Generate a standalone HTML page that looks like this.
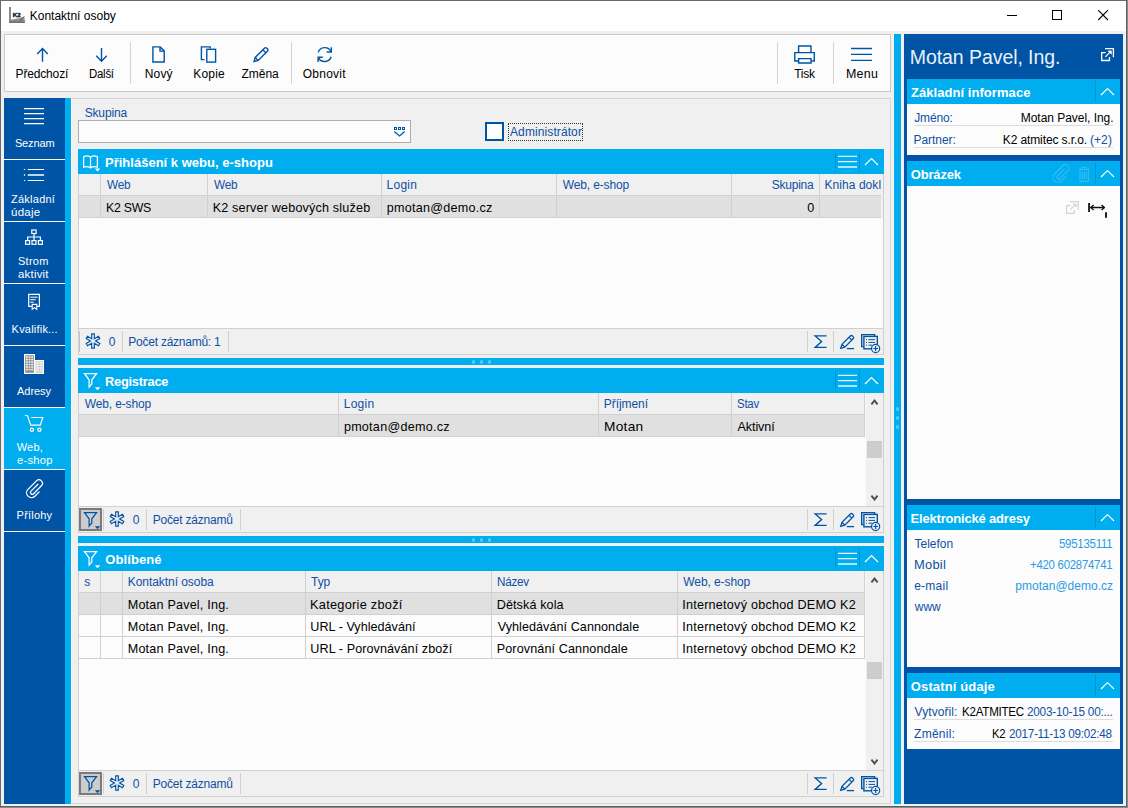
<!DOCTYPE html>
<html lang="cs"><head><meta charset="utf-8"><title>Kontaktní osoby</title>
<style>
html,body{margin:0;padding:0;}
body{width:1128px;height:808px;position:relative;overflow:hidden;background:#f0f0f0;font-family:"Liberation Sans",sans-serif;}
.a{position:absolute;box-sizing:border-box;}
.t{white-space:pre;}
svg{position:absolute;overflow:visible;}
</style></head><body>
<div class="a" style="left:0px;top:0px;width:1128px;height:808px;background:#8c8c8c;"></div>
<div class="a" style="left:0px;top:0px;width:1127px;height:807px;background:#5e5e5e;"></div>
<div class="a" style="left:0px;top:0px;width:1126px;height:806px;background:#6a6a6a;"></div>
<div class="a" style="left:1px;top:1px;width:1125px;height:805px;background:#f0f0f0;"></div>
<div class="a" style="left:1px;top:1px;width:1125px;height:30px;background:#ffffff;"></div>
<svg style="left:9px;top:7px" width="16" height="16" viewBox="0 0 16 16">
<defs><linearGradient id="gi" x1="0" y1="0" x2="0" y2="1"><stop offset="0" stop-color="#b8b8b8"/><stop offset="1" stop-color="#6c6c6c"/></linearGradient></defs>
<rect x="0" y="0" width="2" height="16" fill="#8a8a8a"/>
<path d="M0 13 L8 11.5 L15.5 9.5 L16 16 L0 16Z" fill="url(#gi)"/>
<path d="M11 13.5 L15.3 9.6" stroke="#444" stroke-width="1"/>
<text x="3.7" y="9.7" font-family="Liberation Sans,sans-serif" font-size="6" font-weight="bold" fill="#111" stroke="#111" stroke-width="0.35" textLength="8" lengthAdjust="spacingAndGlyphs">K2</text>
</svg>
<div class="a t" style="top:8.40px;font-size:12px;line-height:16px;color:#000;left:29.76px;">Kontaktní osoby</div>
<svg style="left:1000px;top:0" width="128" height="31" viewBox="0 0 128 31">
<path d="M7 15.5 H17" stroke="#000" stroke-width="1" fill="none"/>
<rect x="52.5" y="10.5" width="9" height="9" stroke="#000" stroke-width="1" fill="none"/>
<path d="M98.2 10.2 L108 20 M108 10.2 L98.2 20" stroke="#000" stroke-width="1.1" fill="none"/>
</svg>
<div class="a" style="left:4px;top:34px;width:887px;height:58px;background:#fcfcfc;border:1px solid #c9c9c9;"></div>
<div class="a" style="left:130px;top:42px;width:1px;height:42px;background:#d4d4d4;"></div>
<div class="a" style="left:291px;top:42px;width:1px;height:42px;background:#d4d4d4;"></div>
<div class="a" style="left:777px;top:42px;width:1px;height:42px;background:#d4d4d4;"></div>
<div class="a" style="left:833px;top:42px;width:1px;height:42px;background:#d4d4d4;"></div>
<div class="a t" style="top:66.00px;font-size:12px;line-height:16px;color:#000;letter-spacing:-0.159px;left:15.56px;">Předchozí</div>
<div class="a t" style="top:66.00px;font-size:12px;line-height:16px;color:#000;letter-spacing:-0.250px;left:88.81px;transform:scaleX(0.9495);transform-origin:0 0;">Další</div>
<div class="a t" style="top:66.00px;font-size:12px;line-height:16px;color:#000;letter-spacing:0.099px;left:144.86px;">Nový</div>
<div class="a t" style="top:66.00px;font-size:12px;line-height:16px;color:#000;letter-spacing:0.183px;left:193.26px;">Kopie</div>
<div class="a t" style="top:66.00px;font-size:12px;line-height:16px;color:#000;letter-spacing:-0.072px;left:241.62px;">Změna</div>
<div class="a t" style="top:66.00px;font-size:12px;line-height:16px;color:#000;letter-spacing:0.250px;left:302.74px;">Obnovit</div>
<div class="a t" style="top:66.00px;font-size:12px;line-height:16px;color:#000;letter-spacing:-0.250px;left:794.15px;">Tisk</div>
<div class="a t" style="top:66.00px;font-size:12px;line-height:16px;color:#000;letter-spacing:0.250px;left:845.53px;transform:scaleX(1.0346);transform-origin:0 0;">Menu</div>
<svg style="left:0;top:34px" width="892" height="58" viewBox="0 34 892 58" fill="none" stroke="#0054a6" stroke-width="1.4">
<path d="M42.5 61.8 V48.6 M37.2 54 L42.5 48.6 L47.8 54"/>
<path d="M101.5 48 V61.2 M96.2 55.8 L101.5 61.2 L106.8 55.8"/>
<path d="M152.9 46.9 H160.2 L164.2 50.9 V62 H152.9 Z M160 47.2 V51.1 H164"/>
<path d="M204.6 59.6 H201.4 V46.9 H210.2 V48.6"/><rect x="206.8" y="49.3" width="8.8" height="12.8"/>
<path d="M254 61.6 L255.2 57.4 L264.4 48.2 Q265.6 47 266.8 48.2 L267.4 48.8 Q268.6 50 267.4 51.2 L258.2 60.4 Z M255.2 57.4 L258.2 60.4 M262.8 49.8 L265.8 52.8"/>
<path d="M318.2 52.4 A6.9 6.9 0 0 1 331 51.6 M331.2 56.8 A6.9 6.9 0 0 1 318.4 57.6"/>
<path d="M331.3 47.3 V52 H326.6 M318.1 61.9 V57.2 H322.8"/>
<path d="M798.6 52 V46 H811 V52 M798.6 61 H794.8 V52.6 H814.3 V61 H811 M798.6 58.6 H811 V63 H798.6 Z" stroke-width="1.4"/>
<path d="M851 48.5 H872 M851 54.4 H872 M851 60.4 H872" stroke-width="1.4"/>
</svg>
<div class="a" style="left:4px;top:98px;width:61px;height:706px;background:#0054a6;"></div>
<div class="a" style="left:65px;top:98px;width:6px;height:706px;background:#00adef;"></div>
<div class="a" style="left:4px;top:408px;width:61px;height:61px;background:#00adef;"></div>
<div class="a" style="left:4px;top:159px;width:61px;height:1px;background:#ffffff;"></div>
<div class="a" style="left:4px;top:221px;width:61px;height:1px;background:#ffffff;"></div>
<div class="a" style="left:4px;top:283px;width:61px;height:1px;background:#ffffff;"></div>
<div class="a" style="left:4px;top:345px;width:61px;height:1px;background:#ffffff;"></div>
<div class="a" style="left:4px;top:407px;width:61px;height:1px;background:#ffffff;"></div>
<div class="a" style="left:4px;top:469px;width:61px;height:1px;background:#ffffff;"></div>
<div class="a" style="left:4px;top:531px;width:61px;height:1px;background:#ffffff;"></div>
<div class="a t" style="top:136.00px;font-size:11px;line-height:14px;color:#ffffff;letter-spacing:-0.118px;left:14.90px;">Seznam</div>
<div class="a t" style="top:192.00px;font-size:11px;line-height:14px;color:#ffffff;letter-spacing:0.250px;left:10.99px;">Základní</div>
<div class="a t" style="top:205.00px;font-size:11px;line-height:14px;color:#ffffff;letter-spacing:0.250px;left:10.98px;transform:scaleX(1.0412);transform-origin:0 0;">údaje</div>
<div class="a t" style="top:254.00px;font-size:11px;line-height:14px;color:#ffffff;letter-spacing:0.250px;left:18.00px;">Strom</div>
<div class="a t" style="top:267.00px;font-size:11px;line-height:14px;color:#ffffff;letter-spacing:0.250px;left:18.25px;transform:scaleX(1.0301);transform-origin:0 0;">aktivit</div>
<div class="a t" style="top:322.00px;font-size:11px;line-height:14px;color:#ffffff;letter-spacing:0.206px;left:11.62px;">Kvalifik...</div>
<div class="a t" style="top:384.00px;font-size:11px;line-height:14px;color:#ffffff;letter-spacing:-0.067px;left:17.10px;">Adresy</div>
<div class="a t" style="top:440.00px;font-size:11px;line-height:14px;color:#ffffff;letter-spacing:0.250px;left:16.70px;">Web,</div>
<div class="a t" style="top:453.00px;font-size:11px;line-height:14px;color:#ffffff;letter-spacing:0.250px;left:16.65px;transform:scaleX(1.0172);transform-origin:0 0;">e-shop</div>
<div class="a t" style="top:508.00px;font-size:11px;line-height:14px;color:#ffffff;letter-spacing:0.207px;left:16.62px;">Přílohy</div>
<svg style="left:4px;top:98px" width="61" height="440" viewBox="4 98 61 440" fill="none" stroke="#fff" stroke-width="1.2">
<path d="M24 108.6 H44 M24 113.6 H44 M24 118.6 H44 M24 123.6 H44" stroke-width="1.2"/>
<path d="M27.8 169.5 H44.1 M27.8 180.5 H44.1 M23.9 169.5 H25.1 M23.9 180.5 H25.1"/><path d="M27.8 175.1 H44.1 M23.9 175.1 H25.1" stroke-width="1.5"/>
<g stroke-width="1.2"><rect x="31.8" y="230" width="4.3" height="3.5"/><path d="M34 233.5 V240.5 M27.7 240.5 V237 H40.4 V240.5"/><rect x="25.6" y="240.6" width="4" height="3.7"/><rect x="32" y="240.6" width="4" height="3.7"/><rect x="38.4" y="240.6" width="4" height="3.7"/></g>
<g stroke-width="1.2"><path d="M32 306.3 H28.7 V294.3 H39.4 V306.3 H37"/><path d="M30.3 297.2 H37.7 M30.3 299.7 H35.8 M30.3 302.2 H33.7" stroke-width="1"/><path d="M32.2 304.4 H36.8 V309.4 L34.5 307.6 L32.2 309.4 Z" stroke-width="1.1"/></g>
<g stroke="none"><rect x="24" y="354" width="11" height="20" fill="#fff"/><rect x="35" y="360" width="9" height="14" fill="#fff"/><rect x="25.2" y="355.2" width="8.7" height="17.6" fill="#8e8e8e"/><rect x="35.5" y="361.2" width="7.3" height="11.6" fill="#d2d2d2"/>
<g fill="#f4f4f4"><rect x="26" y="356.3" width="1.9" height="1.5"/><rect x="28.7" y="356.3" width="1.7" height="1.5"/><rect x="31.2" y="356.3" width="1.9" height="1.5"/><rect x="26" y="358.8" width="1.9" height="1.5"/><rect x="28.7" y="358.8" width="1.7" height="1.5"/><rect x="31.2" y="358.8" width="1.9" height="1.5"/><rect x="26" y="361.3" width="1.9" height="1.5"/><rect x="28.7" y="361.3" width="1.7" height="1.5"/><rect x="31.2" y="361.3" width="1.9" height="1.5"/><rect x="26" y="363.8" width="1.9" height="1.5"/><rect x="28.7" y="363.8" width="1.7" height="1.5"/><rect x="31.2" y="363.8" width="1.9" height="1.5"/><rect x="26" y="366.3" width="1.9" height="1.5"/><rect x="28.7" y="366.3" width="1.7" height="1.5"/><rect x="31.2" y="366.3" width="1.9" height="1.5"/><rect x="26" y="368.8" width="1.9" height="1.5"/><rect x="28.7" y="368.8" width="1.7" height="1.5"/><rect x="31.2" y="368.8" width="1.9" height="1.5"/>
<rect x="36.3" y="362.3" width="2.8" height="1.4"/><rect x="39.9" y="362.3" width="2.2" height="1.4"/><rect x="36.3" y="364.8" width="2.8" height="1.4"/><rect x="39.9" y="364.8" width="2.2" height="1.4"/><rect x="36.3" y="367.3" width="2.8" height="1.4"/><rect x="39.9" y="367.3" width="2.2" height="1.4"/><rect x="36.3" y="369.8" width="2.8" height="1.4"/><rect x="39.9" y="369.8" width="2.2" height="1.4"/></g></g>
<g stroke-width="1.2"><path d="M24.9 415.5 H27.4 L30.7 425.2 H40.3 L42.8 417.5 H31.2"/><circle cx="31.9" cy="429.8" r="1.6"/><circle cx="39.4" cy="429.8" r="1.6"/></g>
<path d="M39.00 490.80 L34.35 495.45 A4.88 4.88 0 0 1 27.45 488.55 L35.93 480.03 A3.5 3.5 0 0 1 40.88 484.98 L33.09 492.89 A1.82 1.82 0 0 1 30.51 490.31 L37.70 483.20" stroke-width="1.25" transform="translate(0.5,0.8)"/>
</svg>
<div class="a" style="left:71px;top:98px;width:820px;height:706px;background:#f0f0f0;border:1px solid #d4d4d4;border-left-color:#fafafa;"></div>
<div class="a t" style="top:105.00px;font-size:12px;line-height:16px;color:#0f4fa3;letter-spacing:-0.163px;left:84.70px;">Skupina</div>
<div class="a" style="left:78px;top:120px;width:333px;height:23px;background:#fcfcfc;border:1px solid #adadad;"></div>
<svg style="left:392px;top:125px" width="16" height="14" viewBox="392 125 16 14" fill="none" stroke="#0054a6" stroke-width="1">
<rect x="394.5" y="127.5" width="2" height="2"/><rect x="398.5" y="127.5" width="2" height="2"/><rect x="402.5" y="127.5" width="2" height="2"/>
<path d="M394.3 131.5 L399.5 136 L404.7 131.5" stroke-width="1.2"/></svg>
<div class="a" style="left:485px;top:122px;width:19px;height:19px;background:#ffffff;border:2px solid #0054a6;"></div>
<div class="a t" style="top:124.00px;font-size:12px;line-height:16px;color:#0f4fa3;letter-spacing:0.100px;left:510.00px;">Administrátor</div>
<div class="a" style="left:508px;top:123px;width:75px;height:18px;border:1px dotted #333;"></div>
<div class="a" style="left:78px;top:149px;width:806px;height:25px;background:#00adef;"></div>
<svg style="left:82px;top:155px" width="20" height="16" viewBox="82 155 20 16" fill="none" stroke="#fff" stroke-width="1.2">
<path d="M83.6 156.7 Q87 155.1 90.5 157 Q94 155.1 97.4 156.7 V167.2 Q94 165.9 90.5 167.7 Q87 165.9 83.6 167.2 Z M90.5 157 V168.4" stroke-width="1.25"/>
<path d="M94.8 168.5 H100.2 L97.5 171.4 Z" fill="#fff" stroke="none"/></svg>
<div class="a t" style="top:154.00px;font-size:13px;line-height:17px;color:#ffffff;font-weight:bold;letter-spacing:0.010px;left:104.99px;">Přihlášení k webu, e-shopu</div>
<div class="a" style="left:835px;top:151px;width:1px;height:21px;background:#0096d6;"></div>
<div class="a" style="left:859px;top:151px;width:1px;height:21px;background:#0096d6;"></div>
<svg style="left:836px;top:149px" width="48" height="25" viewBox="836 0 48 25" fill="none" stroke="#e6f7ff" stroke-width="1.3">
<path d="M838 7.3 H857 M838 12.7 H857 M838 18 H857"/><path d="M865 16 L871.5 9.6 L878 16" stroke="#fff" stroke-width="1.25"/></svg>
<div class="a" style="left:78px;top:174px;width:806px;height:154px;background:#fcfcfc;border-left:1px solid #cfcfcf;border-right:1px solid #cfcfcf;"></div>
<div class="a" style="left:79px;top:174px;width:802px;height:21px;background:#f0f0f0;"></div>
<div class="a" style="left:79px;top:195px;width:802px;height:1px;background:#d0d0d0;"></div>
<div class="a" style="left:79px;top:196px;width:802px;height:21px;background:#e0e0e0;"></div>
<div class="a" style="left:79px;top:217px;width:802px;height:1px;background:#d0d0d0;"></div>
<div class="a" style="left:881px;top:174px;width:2px;height:44px;background:#f0f0f0;"></div>
<div class="a" style="left:100px;top:174px;width:1px;height:44px;background:#d0d0d0;"></div>
<div class="a" style="left:207px;top:174px;width:1px;height:44px;background:#d0d0d0;"></div>
<div class="a" style="left:381px;top:174px;width:1px;height:44px;background:#d0d0d0;"></div>
<div class="a" style="left:556px;top:174px;width:1px;height:44px;background:#d0d0d0;"></div>
<div class="a" style="left:731px;top:174px;width:1px;height:44px;background:#d0d0d0;"></div>
<div class="a" style="left:819px;top:174px;width:1px;height:44px;background:#d0d0d0;"></div>
<div class="a t" style="top:177.00px;font-size:12px;line-height:16px;color:#0f4fa3;letter-spacing:-0.250px;left:106.50px;transform:scaleX(0.9799);transform-origin:0 0;">Web</div>
<div class="a t" style="top:177.00px;font-size:12px;line-height:16px;color:#0f4fa3;letter-spacing:-0.250px;left:213.70px;transform:scaleX(0.9799);transform-origin:0 0;">Web</div>
<div class="a t" style="top:177.00px;font-size:12px;line-height:16px;color:#0f4fa3;letter-spacing:0.250px;left:386.56px;">Login</div>
<div class="a t" style="top:177.00px;font-size:12px;line-height:16px;color:#0f4fa3;letter-spacing:-0.123px;left:562.70px;">Web, e-shop</div>
<div class="a t" style="top:177.00px;font-size:12px;line-height:16px;color:#0f4fa3;letter-spacing:-0.250px;left:771.82px;">Skupina</div>
<div class="a" style="left:820px;top:174px;width:61px;height:21px;overflow:hidden">
<div class="a t" style="top:3.00px;font-size:12px;line-height:16px;color:#0f4fa3;letter-spacing:0.054px;left:4.56px;">Kniha dokl</div>
</div>
<div class="a t" style="top:200.00px;font-size:12.6px;line-height:16px;color:#000;letter-spacing:-0.250px;left:105.52px;transform:scaleX(0.9770);transform-origin:0 0;">K2 SWS</div>
<div class="a t" style="top:200.00px;font-size:12.6px;line-height:16px;color:#000;letter-spacing:0.173px;left:212.70px;">K2 server webových služeb</div>
<div class="a t" style="top:200.00px;font-size:12.6px;line-height:16px;color:#000;letter-spacing:0.250px;left:386.69px;">pmotan@demo.cz</div>
<div class="a t" style="top:200.00px;font-size:12.6px;line-height:16px;color:#000;left:807.14px;">0</div>
<div class="a" style="left:78px;top:328px;width:806px;height:27px;background:#f0f0f0;border:1px solid #d0d0d0;"></div>
<div class="a" style="left:79px;top:331px;width:1px;height:21px;background:#c4c4c4;"></div>
<div class="a" style="left:122px;top:331px;width:1px;height:21px;background:#d0d0d0;"></div>
<div class="a" style="left:228px;top:331px;width:1px;height:21px;background:#d0d0d0;"></div>
<svg style="left:84.7px;top:333.3px" width="16" height="16" viewBox="-8 -8 16 16" fill="none" stroke="#0054a6" stroke-width="1.15" stroke-linejoin="miter">
<path d="M-1.30 -2.25 L-1.30 -7.10 L1.30 -7.10 L1.30 -2.25 L5.50 -4.68 L6.80 -2.42 L2.60 0.00 L6.80 2.42 L5.50 4.68 L1.30 2.25 L1.30 7.10 L-1.30 7.10 L-1.30 2.25 L-5.50 4.68 L-6.80 2.42 L-2.60 -0.00 L-6.80 -2.42 L-5.50 -4.68 Z"/></svg>
<div class="a t" style="top:334.00px;font-size:12px;line-height:16px;color:#0f4fa3;left:108.76px;">0</div>
<div class="a t" style="top:334.00px;font-size:12px;line-height:16px;color:#0f4fa3;letter-spacing:-0.250px;left:128.36px;">Počet záznamů: 1</div>
<div class="a" style="left:807px;top:331px;width:1px;height:21px;background:#d0d0d0;"></div>
<div class="a" style="left:833px;top:331px;width:1px;height:21px;background:#d0d0d0;"></div>
<svg style="left:808px;top:328px" width="76" height="26" viewBox="808 0 76 26" fill="none" stroke="#0054a6" stroke-width="1.3">
<path d="M826.6 7.9 H815.2 L821.6 13.6 L815.2 19.4 H826.6" stroke-width="1.4" stroke-linejoin="miter"/>
<path d="M840.7 20.3 L842 16.3 L850.3 8 Q851.4 6.9 852.5 8 L853.1 8.6 Q854.2 9.7 853.1 10.8 L844.8 19.1 Z M842 16.3 L844.8 19.1 M849 9.3 L851.8 12.1"/><path d="M846.8 20.6 H854"/>
<path d="M863.3 18.6 H861.7 V6.6 H874.6 V8.2" stroke-width="1.4"/><rect x="863.9" y="8.4" width="13.4" height="12.4" stroke-width="1.4"/>
<path d="M868.5 11.6 H875 M868.5 14.4 H875 M868.5 17.2 H872 M866 11.6 H867 M866 14.4 H867 M866 17.2 H867" stroke-width="1"/>
<circle cx="875.6" cy="20.5" r="4.1" fill="#f0f0f0" stroke-width="1.2"/><path d="M873.2 20.5 H878 M875.6 18.1 V22.9" stroke-width="1.2"/>
</svg>
<div class="a" style="left:78px;top:358px;width:806px;height:7px;background:#00adef;"></div>
<div class="a" style="left:471.70000000000005px;top:360.1px;width:3.8px;height:3.8px;background:#4dc9ff;border-radius:2px;"></div>
<div class="a" style="left:479.70000000000005px;top:360.1px;width:3.8px;height:3.8px;background:#4dc9ff;border-radius:2px;"></div>
<div class="a" style="left:487.70000000000005px;top:360.1px;width:3.8px;height:3.8px;background:#4dc9ff;border-radius:2px;"></div>
<div class="a" style="left:78px;top:368px;width:806px;height:25px;background:#00adef;"></div>
<svg style="left:84px;top:373.3px" width="18" height="18" viewBox="0 0 18 18" fill="none" stroke="#fff" stroke-width="1.25" stroke-linejoin="miter">
<path d="M0.5 0.6 H12.6 L7.8 6.8 V10.9 L5.1 14.1 V6.8 Z"/><path d="M10.8 14.2 H16.3 L13.55 17.3 Z" fill="#fff" stroke="none"/></svg>
<div class="a t" style="top:373.00px;font-size:13px;line-height:17px;color:#ffffff;font-weight:bold;letter-spacing:-0.250px;left:105.00px;transform:scaleX(0.9873);transform-origin:0 0;">Registrace</div>
<div class="a" style="left:835px;top:370px;width:1px;height:21px;background:#0096d6;"></div>
<div class="a" style="left:859px;top:370px;width:1px;height:21px;background:#0096d6;"></div>
<svg style="left:836px;top:368px" width="48" height="25" viewBox="836 0 48 25" fill="none" stroke="#e6f7ff" stroke-width="1.3">
<path d="M838 7.3 H857 M838 12.7 H857 M838 18 H857"/><path d="M865 16 L871.5 9.6 L878 16" stroke="#fff" stroke-width="1.25"/></svg>
<div class="a" style="left:78px;top:393px;width:806px;height:113px;background:#fcfcfc;border-left:1px solid #cfcfcf;border-right:1px solid #cfcfcf;"></div>
<div class="a" style="left:79px;top:393px;width:786px;height:21px;background:#f0f0f0;"></div>
<div class="a" style="left:79px;top:414px;width:786px;height:1px;background:#d0d0d0;"></div>
<div class="a" style="left:79px;top:415px;width:786px;height:21px;background:#e0e0e0;"></div>
<div class="a" style="left:79px;top:436px;width:786px;height:1px;background:#d0d0d0;"></div>
<div class="a" style="left:338px;top:393px;width:1px;height:44px;background:#d0d0d0;"></div>
<div class="a" style="left:598px;top:393px;width:1px;height:44px;background:#d0d0d0;"></div>
<div class="a" style="left:731px;top:393px;width:1px;height:44px;background:#d0d0d0;"></div>
<div class="a t" style="top:396.00px;font-size:12px;line-height:16px;color:#0f4fa3;letter-spacing:-0.123px;left:84.70px;">Web, e-shop</div>
<div class="a t" style="top:396.00px;font-size:12px;line-height:16px;color:#0f4fa3;letter-spacing:0.250px;left:343.76px;">Login</div>
<div class="a t" style="top:396.00px;font-size:12px;line-height:16px;color:#0f4fa3;letter-spacing:-0.060px;left:603.76px;">Příjmení</div>
<div class="a t" style="top:396.00px;font-size:12px;line-height:16px;color:#0f4fa3;letter-spacing:-0.250px;left:737.02px;transform:scaleX(0.9534);transform-origin:0 0;">Stav</div>
<div class="a t" style="top:419.00px;font-size:12.6px;line-height:16px;color:#000;letter-spacing:0.250px;left:343.89px;">pmotan@demo.cz</div>
<div class="a t" style="top:419.00px;font-size:12.6px;line-height:16px;color:#000;letter-spacing:0.250px;left:603.61px;transform:scaleX(1.0887);transform-origin:0 0;">Motan</div>
<div class="a t" style="top:419.00px;font-size:12.6px;line-height:16px;color:#000;letter-spacing:-0.102px;left:737.50px;">Aktivní</div>
<div class="a" style="left:864px;top:393px;width:1px;height:44px;background:#d0d0d0;"></div>
<div class="a" style="left:865px;top:393px;width:18px;height:113px;background:#f0f0f0;"></div>
<div class="a" style="left:865px;top:393px;width:1px;height:113px;background:#fafafa;"></div>
<div class="a" style="left:867px;top:441px;width:15px;height:17px;background:#cdcdcd;"></div>
<svg style="left:865px;top:393px" width="18" height="113" viewBox="0 0 18 113" fill="none" stroke="#4d4d4d" stroke-width="1.9" stroke-linejoin="miter">
<path d="M6.4 11.3 L9.5 7.6 L12.6 11.3"/><path d="M6.4 102.7 L9.5 106.4 L12.6 102.7"/></svg>
<div class="a" style="left:78px;top:506px;width:806px;height:27px;background:#f0f0f0;border:1px solid #d0d0d0;"></div>
<div class="a" style="left:79px;top:508px;width:23px;height:23px;background:#cccccc;border:2px solid #7a7a7a;"></div>
<svg style="left:84px;top:512.3px" width="18" height="18" viewBox="0 0 18 18" fill="none" stroke="#0054a6" stroke-width="1.25" stroke-linejoin="miter">
<path d="M0.5 0.6 H12.6 L7.8 6.8 V10.9 L5.1 14.1 V6.8 Z"/><path d="M10.8 14.2 H16.3 L13.55 17.3 Z" fill="#0054a6" stroke="none"/></svg>
<div class="a" style="left:103px;top:509px;width:1px;height:21px;background:#d0d0d0;"></div>
<div class="a" style="left:146px;top:509px;width:1px;height:21px;background:#d0d0d0;"></div>
<div class="a" style="left:240px;top:509px;width:1px;height:21px;background:#d0d0d0;"></div>
<svg style="left:108.7px;top:511.3px" width="16" height="16" viewBox="-8 -8 16 16" fill="none" stroke="#0054a6" stroke-width="1.15" stroke-linejoin="miter">
<path d="M-1.30 -2.25 L-1.30 -7.10 L1.30 -7.10 L1.30 -2.25 L5.50 -4.68 L6.80 -2.42 L2.60 0.00 L6.80 2.42 L5.50 4.68 L1.30 2.25 L1.30 7.10 L-1.30 7.10 L-1.30 2.25 L-5.50 4.68 L-6.80 2.42 L-2.60 -0.00 L-6.80 -2.42 L-5.50 -4.68 Z"/></svg>
<div class="a t" style="top:512.00px;font-size:12px;line-height:16px;color:#0f4fa3;left:132.86px;">0</div>
<div class="a t" style="top:512.00px;font-size:12px;line-height:16px;color:#0f4fa3;letter-spacing:-0.203px;left:152.76px;">Počet záznamů</div>
<div class="a" style="left:807px;top:509px;width:1px;height:21px;background:#d0d0d0;"></div>
<div class="a" style="left:833px;top:509px;width:1px;height:21px;background:#d0d0d0;"></div>
<svg style="left:808px;top:506px" width="76" height="26" viewBox="808 0 76 26" fill="none" stroke="#0054a6" stroke-width="1.3">
<path d="M826.6 7.9 H815.2 L821.6 13.6 L815.2 19.4 H826.6" stroke-width="1.4" stroke-linejoin="miter"/>
<path d="M840.7 20.3 L842 16.3 L850.3 8 Q851.4 6.9 852.5 8 L853.1 8.6 Q854.2 9.7 853.1 10.8 L844.8 19.1 Z M842 16.3 L844.8 19.1 M849 9.3 L851.8 12.1"/><path d="M846.8 20.6 H854"/>
<path d="M863.3 18.6 H861.7 V6.6 H874.6 V8.2" stroke-width="1.4"/><rect x="863.9" y="8.4" width="13.4" height="12.4" stroke-width="1.4"/>
<path d="M868.5 11.6 H875 M868.5 14.4 H875 M868.5 17.2 H872 M866 11.6 H867 M866 14.4 H867 M866 17.2 H867" stroke-width="1"/>
<circle cx="875.6" cy="20.5" r="4.1" fill="#f0f0f0" stroke-width="1.2"/><path d="M873.2 20.5 H878 M875.6 18.1 V22.9" stroke-width="1.2"/>
</svg>
<div class="a" style="left:78px;top:536px;width:806px;height:7px;background:#00adef;"></div>
<div class="a" style="left:471.70000000000005px;top:538.1px;width:3.8px;height:3.8px;background:#4dc9ff;border-radius:2px;"></div>
<div class="a" style="left:479.70000000000005px;top:538.1px;width:3.8px;height:3.8px;background:#4dc9ff;border-radius:2px;"></div>
<div class="a" style="left:487.70000000000005px;top:538.1px;width:3.8px;height:3.8px;background:#4dc9ff;border-radius:2px;"></div>
<div class="a" style="left:78px;top:546px;width:806px;height:25px;background:#00adef;"></div>
<svg style="left:84px;top:551.3px" width="18" height="18" viewBox="0 0 18 18" fill="none" stroke="#fff" stroke-width="1.25" stroke-linejoin="miter">
<path d="M0.5 0.6 H12.6 L7.8 6.8 V10.9 L5.1 14.1 V6.8 Z"/><path d="M10.8 14.2 H16.3 L13.55 17.3 Z" fill="#fff" stroke="none"/></svg>
<div class="a t" style="top:551.00px;font-size:13px;line-height:17px;color:#ffffff;font-weight:bold;letter-spacing:0.114px;left:105.20px;">Oblíbené</div>
<div class="a" style="left:835px;top:548px;width:1px;height:21px;background:#0096d6;"></div>
<div class="a" style="left:859px;top:548px;width:1px;height:21px;background:#0096d6;"></div>
<svg style="left:836px;top:546px" width="48" height="25" viewBox="836 0 48 25" fill="none" stroke="#e6f7ff" stroke-width="1.3">
<path d="M838 7.3 H857 M838 12.7 H857 M838 18 H857"/><path d="M865 16 L871.5 9.6 L878 16" stroke="#fff" stroke-width="1.25"/></svg>
<div class="a" style="left:78px;top:571px;width:806px;height:199px;background:#fcfcfc;border-left:1px solid #cfcfcf;border-right:1px solid #cfcfcf;"></div>
<div class="a" style="left:79px;top:571px;width:786px;height:21px;background:#f0f0f0;"></div>
<div class="a" style="left:79px;top:592px;width:786px;height:1px;background:#d0d0d0;"></div>
<div class="a" style="left:79px;top:593px;width:786px;height:21px;background:#e0e0e0;"></div>
<div class="a" style="left:79px;top:614px;width:786px;height:1px;background:#d0d0d0;"></div>
<div class="a" style="left:79px;top:636px;width:786px;height:1px;background:#d0d0d0;"></div>
<div class="a" style="left:79px;top:658px;width:786px;height:1px;background:#d0d0d0;"></div>
<div class="a" style="left:100px;top:571px;width:1px;height:88px;background:#d0d0d0;"></div>
<div class="a" style="left:122px;top:571px;width:1px;height:88px;background:#d0d0d0;"></div>
<div class="a" style="left:305px;top:571px;width:1px;height:88px;background:#d0d0d0;"></div>
<div class="a" style="left:491px;top:571px;width:1px;height:88px;background:#d0d0d0;"></div>
<div class="a" style="left:677px;top:571px;width:1px;height:88px;background:#d0d0d0;"></div>
<div class="a t" style="top:574.00px;font-size:12px;line-height:16px;color:#0f4fa3;left:84.19px;">s</div>
<div class="a t" style="top:574.00px;font-size:12px;line-height:16px;color:#0f4fa3;letter-spacing:-0.058px;left:127.76px;">Kontaktní osoba</div>
<div class="a t" style="top:574.00px;font-size:12px;line-height:16px;color:#0f4fa3;letter-spacing:-0.053px;left:311.05px;">Typ</div>
<div class="a t" style="top:574.00px;font-size:12px;line-height:16px;color:#0f4fa3;letter-spacing:-0.250px;left:496.79px;transform:scaleX(0.9758);transform-origin:0 0;">Název</div>
<div class="a t" style="top:574.00px;font-size:12px;line-height:16px;color:#0f4fa3;letter-spacing:-0.083px;left:683.30px;">Web, e-shop</div>
<div class="a t" style="top:597.00px;font-size:12.6px;line-height:16px;color:#000;letter-spacing:0.198px;left:127.70px;">Motan Pavel, Ing.</div>
<div class="a t" style="top:597.00px;font-size:12.6px;line-height:16px;color:#000;letter-spacing:0.250px;left:310.29px;transform:scaleX(1.0150);transform-origin:0 0;">Kategorie zboží</div>
<div class="a t" style="top:597.00px;font-size:12.6px;line-height:16px;color:#000;letter-spacing:0.112px;left:496.70px;">Dětská kola</div>
<div class="a t" style="top:597.00px;font-size:12.6px;line-height:16px;color:#000;letter-spacing:0.250px;left:682.17px;">Internetový obchod DEMO K2</div>
<div class="a t" style="top:619.00px;font-size:12.6px;line-height:16px;color:#000;letter-spacing:0.198px;left:127.70px;">Motan Pavel, Ing.</div>
<div class="a t" style="top:619.00px;font-size:12.6px;line-height:16px;color:#000;letter-spacing:0.022px;left:310.36px;">URL - Vyhledávání</div>
<div class="a t" style="top:619.00px;font-size:12.6px;line-height:16px;color:#000;letter-spacing:0.056px;left:497.70px;">Vyhledávání Cannondale</div>
<div class="a t" style="top:619.00px;font-size:12.6px;line-height:16px;color:#000;letter-spacing:0.250px;left:682.17px;">Internetový obchod DEMO K2</div>
<div class="a t" style="top:641.00px;font-size:12.6px;line-height:16px;color:#000;letter-spacing:0.198px;left:127.70px;">Motan Pavel, Ing.</div>
<div class="a t" style="top:641.00px;font-size:12.6px;line-height:16px;color:#000;letter-spacing:0.072px;left:310.36px;">URL - Porovnávání zboží</div>
<div class="a t" style="top:641.00px;font-size:12.6px;line-height:16px;color:#000;letter-spacing:0.117px;left:496.70px;">Porovnání Cannondale</div>
<div class="a t" style="top:641.00px;font-size:12.6px;line-height:16px;color:#000;letter-spacing:0.250px;left:682.17px;">Internetový obchod DEMO K2</div>
<div class="a" style="left:864px;top:571px;width:1px;height:88px;background:#d0d0d0;"></div>
<div class="a" style="left:865px;top:571px;width:18px;height:199px;background:#f0f0f0;"></div>
<div class="a" style="left:865px;top:571px;width:1px;height:199px;background:#fafafa;"></div>
<div class="a" style="left:867px;top:662px;width:15px;height:17px;background:#cdcdcd;"></div>
<svg style="left:865px;top:571px" width="18" height="199" viewBox="0 0 18 199" fill="none" stroke="#4d4d4d" stroke-width="1.9" stroke-linejoin="miter">
<path d="M6.4 11.3 L9.5 7.6 L12.6 11.3"/><path d="M6.4 188.7 L9.5 192.4 L12.6 188.7"/></svg>
<div class="a" style="left:78px;top:770px;width:806px;height:27px;background:#f0f0f0;border:1px solid #d0d0d0;"></div>
<div class="a" style="left:79px;top:772px;width:23px;height:23px;background:#cccccc;border:2px solid #7a7a7a;"></div>
<svg style="left:84px;top:776.3px" width="18" height="18" viewBox="0 0 18 18" fill="none" stroke="#0054a6" stroke-width="1.25" stroke-linejoin="miter">
<path d="M0.5 0.6 H12.6 L7.8 6.8 V10.9 L5.1 14.1 V6.8 Z"/><path d="M10.8 14.2 H16.3 L13.55 17.3 Z" fill="#0054a6" stroke="none"/></svg>
<div class="a" style="left:103px;top:773px;width:1px;height:21px;background:#d0d0d0;"></div>
<div class="a" style="left:146px;top:773px;width:1px;height:21px;background:#d0d0d0;"></div>
<div class="a" style="left:240px;top:773px;width:1px;height:21px;background:#d0d0d0;"></div>
<svg style="left:108.7px;top:775.3px" width="16" height="16" viewBox="-8 -8 16 16" fill="none" stroke="#0054a6" stroke-width="1.15" stroke-linejoin="miter">
<path d="M-1.30 -2.25 L-1.30 -7.10 L1.30 -7.10 L1.30 -2.25 L5.50 -4.68 L6.80 -2.42 L2.60 0.00 L6.80 2.42 L5.50 4.68 L1.30 2.25 L1.30 7.10 L-1.30 7.10 L-1.30 2.25 L-5.50 4.68 L-6.80 2.42 L-2.60 -0.00 L-6.80 -2.42 L-5.50 -4.68 Z"/></svg>
<div class="a t" style="top:776.00px;font-size:12px;line-height:16px;color:#0f4fa3;left:132.86px;">0</div>
<div class="a t" style="top:776.00px;font-size:12px;line-height:16px;color:#0f4fa3;letter-spacing:-0.203px;left:152.76px;">Počet záznamů</div>
<div class="a" style="left:807px;top:773px;width:1px;height:21px;background:#d0d0d0;"></div>
<div class="a" style="left:833px;top:773px;width:1px;height:21px;background:#d0d0d0;"></div>
<svg style="left:808px;top:770px" width="76" height="26" viewBox="808 0 76 26" fill="none" stroke="#0054a6" stroke-width="1.3">
<path d="M826.6 7.9 H815.2 L821.6 13.6 L815.2 19.4 H826.6" stroke-width="1.4" stroke-linejoin="miter"/>
<path d="M840.7 20.3 L842 16.3 L850.3 8 Q851.4 6.9 852.5 8 L853.1 8.6 Q854.2 9.7 853.1 10.8 L844.8 19.1 Z M842 16.3 L844.8 19.1 M849 9.3 L851.8 12.1"/><path d="M846.8 20.6 H854"/>
<path d="M863.3 18.6 H861.7 V6.6 H874.6 V8.2" stroke-width="1.4"/><rect x="863.9" y="8.4" width="13.4" height="12.4" stroke-width="1.4"/>
<path d="M868.5 11.6 H875 M868.5 14.4 H875 M868.5 17.2 H872 M866 11.6 H867 M866 14.4 H867 M866 17.2 H867" stroke-width="1"/>
<circle cx="875.6" cy="20.5" r="4.1" fill="#f0f0f0" stroke-width="1.2"/><path d="M873.2 20.5 H878 M875.6 18.1 V22.9" stroke-width="1.2"/>
</svg>
<div class="a" style="left:894px;top:34px;width:7px;height:770px;background:#00adef;"></div>
<div class="a" style="left:895.7px;top:407.1px;width:3.8px;height:3.8px;background:#4dc9ff;border-radius:2px;"></div>
<div class="a" style="left:895.7px;top:416.1px;width:3.8px;height:3.8px;background:#4dc9ff;border-radius:2px;"></div>
<div class="a" style="left:895.7px;top:425.1px;width:3.8px;height:3.8px;background:#4dc9ff;border-radius:2px;"></div>
<div class="a" style="left:904px;top:34px;width:219px;height:770px;background:#0054a6;"></div>
<div class="a t" style="top:44.50px;font-size:19.5px;line-height:25px;color:#e9f0f8;letter-spacing:-0.067px;left:909.78px;">Motan Pavel, Ing.</div>
<svg style="left:1100px;top:47px" width="16" height="16" viewBox="1100 47 16 16" fill="none" stroke="#fff" stroke-width="1.3">
<path d="M1105 48.7 H1113.4 V57.2"/><path d="M1105.6 52.7 H1101.7 V60.5 H1109.5 V57"/><path d="M1105.4 56.8 L1111 51.2" stroke-width="1.2"/><path d="M1108 50.9 H1111.4 V54.3 Z" fill="#fff" stroke-width="0.6"/></svg>
<div class="a" style="left:907px;top:79px;width:213px;height:25px;background:#00adef;"></div>
<div class="a t" style="top:84.00px;font-size:13px;line-height:17px;color:#ffffff;font-weight:bold;letter-spacing:0.060px;left:910.92px;">Základní informace</div>
<div class="a" style="left:1095px;top:81px;width:1px;height:21px;background:#0096d6;"></div>
<svg style="left:1098px;top:79px" width="20" height="25" viewBox="1098 0 20 25" fill="none" stroke="#fff" stroke-width="1.25"><path d="M1101 16 L1107.5 9.6 L1114 16"/></svg>
<div class="a" style="left:907px;top:104px;width:213px;height:51px;background:#fcfcfc;"></div>
<div class="a t" style="top:110.00px;font-size:12px;line-height:16px;color:#0f4fa3;letter-spacing:-0.176px;left:914.31px;">Jméno:</div>
<div class="a t" style="top:110.00px;font-size:12px;line-height:16px;color:#000;letter-spacing:-0.035px;left:1020.76px;">Motan Pavel, Ing.</div>
<div class="a" style="left:914px;top:125px;width:199px;height:1px;background:#dcdcdc;"></div>
<div class="a t" style="top:132.00px;font-size:12px;line-height:16px;color:#0f4fa3;letter-spacing:-0.066px;left:913.56px;">Partner:</div>
<div class="a t" style="top:132.00px;font-size:12px;line-height:16px;color:#000;letter-spacing:-0.107px;left:1002.76px;">K2 atmitec s.r.o.</div>
<div class="a t" style="top:132.00px;font-size:12px;line-height:16px;color:#0f4fa3;letter-spacing:0.099px;left:1089.91px;">(+2)</div>
<div class="a" style="left:914px;top:147px;width:199px;height:1px;background:#dcdcdc;"></div>
<div class="a" style="left:907px;top:161px;width:213px;height:25px;background:#00adef;"></div>
<div class="a t" style="top:166.00px;font-size:13px;line-height:17px;color:#ffffff;font-weight:bold;letter-spacing:-0.187px;left:910.80px;">Obrázek</div>
<div class="a" style="left:1095px;top:163px;width:1px;height:21px;background:#0096d6;"></div>
<svg style="left:1098px;top:161px" width="20" height="25" viewBox="1098 0 20 25" fill="none" stroke="#fff" stroke-width="1.25"><path d="M1101 16 L1107.5 9.6 L1114 16"/></svg>
<div class="a" style="left:907px;top:186px;width:213px;height:313px;background:#fcfcfc;"></div>
<svg style="left:1050px;top:164px" width="44" height="20" viewBox="1050 164 44 20" fill="none" stroke="#33bbf2" stroke-width="1.15">
<path d="M1066.00 176.50 L1061.35 181.15 A4.88 4.88 0 0 1 1054.45 174.25 L1062.93 165.73 A3.5 3.5 0 0 1 1067.88 170.68 L1060.09 178.59 A1.82 1.82 0 0 1 1057.51 176.01 L1064.70 168.90"/>
<path d="M1079 169.5 H1089.5 M1082 169.3 V167.6 H1086.5 V169.3 M1080 170 V181.4 H1088.5 V170 M1082.3 172 V179.5 M1084.3 172 V179.5 M1086.3 172 V179.5"/></svg>
<svg style="left:1064px;top:198px" width="46" height="22" viewBox="1064 198 46 22" fill="none">
<g stroke="#d4d4d4" stroke-width="1.2" transform="translate(-35.1,152.9)"><path d="M1105 48.7 H1113.4 V57.2"/><path d="M1105.6 52.7 H1101.7 V60.5 H1109.5 V57"/><path d="M1105.4 56.8 L1111 51.2"/><path d="M1108 50.9 H1111.4 V54.3 Z" fill="#d4d4d4" stroke-width="0.5"/></g>
<g stroke="#111"><path d="M1089.05 203 V212" stroke-width="1.8"/><path d="M1090.5 207.5 H1104.6" stroke-width="1.5"/><path d="M1093.6 204.9 L1090.9 207.5 L1093.6 210.1 M1101.6 204.9 L1104.3 207.5 L1101.6 210.1" stroke-width="1.4"/><path d="M1106 212.2 V217.8" stroke-width="1.9"/></g></svg>
<div class="a" style="left:907px;top:505px;width:213px;height:25px;background:#00adef;"></div>
<div class="a t" style="top:510.00px;font-size:13px;line-height:17px;color:#ffffff;font-weight:bold;letter-spacing:-0.183px;left:910.49px;">Elektronické adresy</div>
<div class="a" style="left:1095px;top:507px;width:1px;height:21px;background:#0096d6;"></div>
<svg style="left:1098px;top:505px" width="20" height="25" viewBox="1098 0 20 25" fill="none" stroke="#fff" stroke-width="1.25"><path d="M1101 16 L1107.5 9.6 L1114 16"/></svg>
<div class="a" style="left:907px;top:530px;width:213px;height:137px;background:#fcfcfc;"></div>
<div class="a t" style="top:536.00px;font-size:12px;line-height:16px;color:#0f4fa3;letter-spacing:0.015px;left:914.45px;">Telefon</div>
<div class="a t" style="top:536.00px;font-size:12px;line-height:16px;color:#2b9be3;letter-spacing:-0.250px;left:1059.38px;transform:scaleX(0.9530);transform-origin:0 0;">595135111</div>
<div class="a t" style="top:557.00px;font-size:12px;line-height:16px;color:#0f4fa3;letter-spacing:0.250px;left:913.69px;transform:scaleX(1.0735);transform-origin:0 0;">Mobil</div>
<div class="a t" style="top:557.00px;font-size:12px;line-height:16px;color:#2b9be3;letter-spacing:-0.250px;left:1030.47px;transform:scaleX(0.9469);transform-origin:0 0;">+420 602874741</div>
<div class="a t" style="top:578.00px;font-size:12px;line-height:16px;color:#0f4fa3;letter-spacing:0.250px;left:914.20px;">e-mail</div>
<div class="a t" style="top:578.00px;font-size:12px;line-height:16px;color:#2b9be3;letter-spacing:0.020px;left:1015.25px;">pmotan@demo.cz</div>
<div class="a t" style="top:599.00px;font-size:12px;line-height:16px;color:#0f4fa3;letter-spacing:-0.022px;left:914.76px;">www</div>
<div class="a" style="left:907px;top:673px;width:213px;height:25px;background:#00adef;"></div>
<div class="a t" style="top:678.00px;font-size:13px;line-height:17px;color:#ffffff;font-weight:bold;letter-spacing:0.131px;left:910.80px;">Ostatní údaje</div>
<div class="a" style="left:1095px;top:675px;width:1px;height:21px;background:#0096d6;"></div>
<svg style="left:1098px;top:673px" width="20" height="25" viewBox="1098 0 20 25" fill="none" stroke="#fff" stroke-width="1.25"><path d="M1101 16 L1107.5 9.6 L1114 16"/></svg>
<div class="a" style="left:907px;top:698px;width:213px;height:51px;background:#fcfcfc;"></div>
<div class="a t" style="top:704.00px;font-size:12px;line-height:16px;color:#0f4fa3;letter-spacing:0.082px;left:914.50px;">Vytvořil:</div>
<div class="a t" style="top:704.00px;font-size:12px;line-height:16px;color:#000;letter-spacing:-0.250px;left:961.50px;transform:scaleX(0.9652);transform-origin:0 0;">K2ATMITEC</div>
<div class="a t" style="top:704.00px;font-size:12px;line-height:16px;color:#0f4fa3;letter-spacing:-0.250px;left:1026.95px;transform:scaleX(0.9819);transform-origin:0 0;">2003-10-15 00:...</div>
<div class="a" style="left:914px;top:719px;width:199px;height:1px;background:#dcdcdc;"></div>
<div class="a t" style="top:726.00px;font-size:12px;line-height:16px;color:#0f4fa3;letter-spacing:0.250px;left:914.12px;">Změnil:</div>
<div class="a t" style="top:726.00px;font-size:12px;line-height:16px;color:#000;letter-spacing:-0.250px;left:992.42px;transform:scaleX(0.9427);transform-origin:0 0;">K2</div>
<div class="a t" style="top:726.00px;font-size:12px;line-height:16px;color:#0f4fa3;letter-spacing:-0.250px;left:1009.15px;transform:scaleX(0.9715);transform-origin:0 0;">2017-11-13 09:02:48</div>
<div class="a" style="left:914px;top:741px;width:199px;height:1px;background:#dcdcdc;"></div>
</body></html>
